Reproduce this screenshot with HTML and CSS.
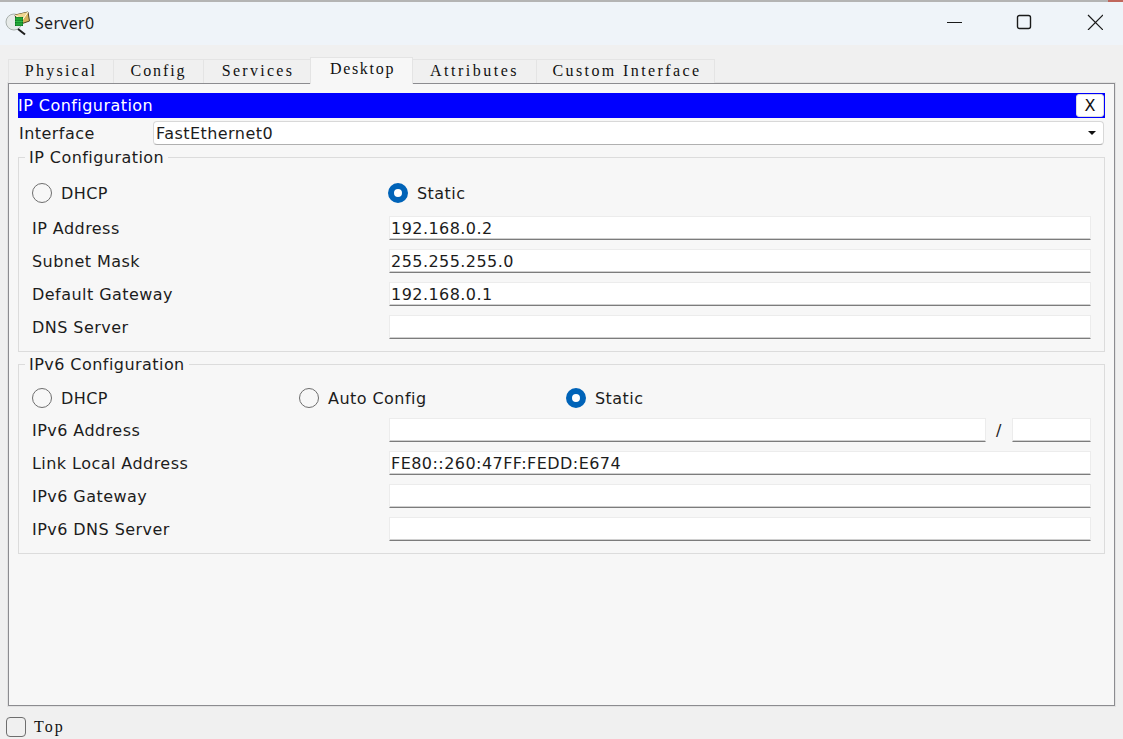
FILE: index.html
```html
<!DOCTYPE html>
<html lang="en">
<head>
<meta charset="utf-8">
<title>Server0</title>
<link rel="stylesheet" href="styles.css">
</head>
<body>
<div class="window">
  <div class="topline"><span class="topline-red"></span></div>
  <header class="titlebar">
    <svg class="appicon" width="26" height="26" viewBox="0 0 26 26">
      <circle cx="9" cy="11" r="8" fill="#e6eae8" stroke="#a9b0ad"/>
      <path d="M10 4 L23 1 L24.500 10 L13 14 Z" fill="#d8b35c" stroke="#4f4320"/>
      <path d="M10 4 L17.500 9 L23 1" fill="#efd58e" stroke="#fff8e0"/>
      <rect x="10" y="6" width="8" height="9" fill="#0b6f20"/>
      <path d="M12 6v9M14 6v9M16 6v9M10 8h8M10 10.500h8M10 13h8" stroke="#36cf4c" stroke-width=".7"/>
      <path d="M13 18 L20 23.500" stroke="#1c1c1c" stroke-width="2"/>
    </svg>
    <span class="wintitle">Server0</span>
    <div class="controls">
      <svg class="ctl-min" width="16" height="16" viewBox="0 0 16 16"><path d="M0 8.500H15" stroke="#1a1a1a"/></svg>
      <svg width="16" height="16" viewBox="0 0 16 16"><rect x="1.500" y="1.500" width="13" height="13" rx="2" fill="none" stroke="#1a1a1a" stroke-width="1.400"/></svg>
      <svg width="16" height="16" viewBox="0 0 16 16"><path d="M1 1L16 16M16 1L1 16" stroke="#1a1a1a" stroke-width="1.200"/></svg>
    </div>
  </header>
  <nav class="tabs">
    <span class="tab tab-physical">Physical</span>
    <span class="tab tab-config">Config</span>
    <span class="tab tab-services">Services</span>
    <span class="tab tab-desktop">Desktop</span>
    <span class="tab tab-attributes">Attributes</span>
    <span class="tab tab-custom">Custom Interface</span>
  </nav>
  <main class="panel">
    <div class="bluebar"><span>IP Configuration</span><span class="closebtn">X</span></div>
    <div class="ifrow">
      <span class="iflabel">Interface</span>
      <div class="select"><span>FastEthernet0</span><span class="caret"></span></div>
    </div>
    <section class="group group-v4">
      <span class="legend">IP Configuration</span>
      <div class="radios radios-v4">
        <label class="radio"><span class="dot"></span>DHCP</label>
        <label class="radio"><span class="dot on"></span>Static</label>
      </div>
      <div class="row"><span>IP Address</span><div class="field">192.168.0.2</div></div>
      <div class="row"><span>Subnet Mask</span><div class="field">255.255.255.0</div></div>
      <div class="row"><span>Default Gateway</span><div class="field">192.168.0.1</div></div>
      <div class="row"><span>DNS Server</span><div class="field"></div></div>
    </section>
    <section class="group group-v6">
      <span class="legend">IPv6 Configuration</span>
      <div class="radios radios-v6">
        <label class="radio"><span class="dot"></span>DHCP</label>
        <label class="radio"><span class="dot"></span>Auto Config</label>
        <label class="radio"><span class="dot on"></span>Static</label>
      </div>
      <div class="row"><span>IPv6 Address</span><div class="field-split"><div class="field"></div><span class="slash">/</span><div class="field prefix"></div></div></div>
      <div class="row"><span>Link Local Address</span><div class="field">FE80::260:47FF:FEDD:E674</div></div>
      <div class="row"><span>IPv6 Gateway</span><div class="field"></div></div>
      <div class="row"><span>IPv6 DNS Server</span><div class="field"></div></div>
    </section>
  </main>
  <footer class="footer"><span class="check"></span><span class="toplabel">Top</span></footer>
</div>
</body>
</html>
```
FILE: styles.css
```css
* { box-sizing: border-box; }
html, body { margin: 0; height: 100%; overflow: hidden; }
body { background: #f0f0f0; font-family: "DejaVu Sans", sans-serif; font-size: 16px; letter-spacing: .45px; color: #1c1c1c; }
.window { height: 739px; display: flex; flex-direction: column; }

.topline { height: 2px; background: #b4b4b4; display: flex; justify-content: flex-end; flex: none; }
.topline-red { width: 15px; background: #c0675c; }
.titlebar { height: 43px; flex: none; background: #eff4f9; display: flex; align-items: center; padding: 0 20px 0 5px; }
.appicon { flex: none; }
.wintitle { margin-left: 4px; font-family: "Noto Sans", sans-serif; font-size: 16px; letter-spacing: .3px; position: relative; top: -1px; }
.controls { margin-left: auto; margin-bottom: 3px; display: flex; gap: 55px; align-items: center; }
.ctl-min { margin-right: -2px; }

.tabs { display: flex; align-items: flex-end; height: 38px; padding-left: 8px; flex: none; font-family: "Liberation Serif", serif; font-size: 16px; letter-spacing: 2.3px; color: #111; position: relative; z-index: 1; }
.tab { height: 24px; display: flex; align-items: center; justify-content: center; background: #f0f0f0; border: 1px solid #e4e4e4; border-bottom: 0; margin-left: -1px; padding-bottom: 2px; }
.tab-physical { width: 106px; margin-left: 0; }
.tab-config { width: 91px; letter-spacing: 1.9px; }
.tab-services { width: 108px; padding-left: 2px; }
.tab-desktop { width: 103px; height: 27px; background: #f7f7f7; margin-bottom: -1px; padding-bottom: 4px; letter-spacing: 1.700px; padding-left: 2px; }
.tab-attributes { width: 125px; letter-spacing: 2.5px; }
.tab-custom { width: 179px; letter-spacing: 2.400px; padding-left: 3px; }

.panel { width: 1107px; height: 623px; margin-left: 8px; flex: none; background: #f7f7f7; border: 1px solid #8c8c90; padding: 9px 9px 0 9px; box-shadow: 0 0 0 1px #e2e2e2; }
.bluebar { height: 25px; background: #0000ff; color: #fff; display: flex; justify-content: space-between; align-items: center; line-height: 25px; }
.closebtn { width: 28px; height: 23px; margin-right: 1px; background: #fff; color: #111; border-radius: 3px; border: 1px solid #ddd; text-align: center; line-height: 21px; font-size: 16px; letter-spacing: 0; }
.ifrow { display: flex; align-items: center; height: 24px; margin-top: 3px; padding-left: 1px; }
.iflabel { width: 134px; flex: none; }
.select { width: 951px; height: 24px; background: #fff; border: 1px solid #d8d8d8; border-bottom-color: #b0b0b0; border-radius: 4px; display: flex; align-items: center; justify-content: space-between; padding: 0 7px 0 2px; }
.caret { width: 0; height: 0; border-left: 4px solid transparent; border-right: 4px solid transparent; border-top: 4px solid #111; }

.group { position: relative; width: 1087px; border: 1px solid #dcdcdc; padding: 0 13px 0 13px; }
.group-v4 { height: 195px; margin-top: 12px; }
.group-v6 { height: 190px; margin-top: 12px; }
.legend { position: absolute; left: 6px; top: -11px; background: #f7f7f7; padding: 0 4px; line-height: 22px; }

.radios { display: flex; align-items: center; height: 20px; }
.radios-v4 { margin-top: 25px; margin-bottom: 13px; }
.radios-v6 { margin-top: 23px; margin-bottom: 10px; }
.radio { display: flex; align-items: center; gap: 9px; }
.radios-v4 .radio:first-child { width: 356px; }
.radios-v6 .radio:first-child { width: 267px; }
.radios-v6 .radio:nth-child(2) { width: 267px; }
.dot { width: 20px; height: 20px; border-radius: 50%; border: 1px solid #6e6e6e; background: #f7f7f7; flex: none; }
.dot.on { border: 6px solid #0063b8; background: #fff; }

.row { display: flex; align-items: center; height: 24px; margin-bottom: 9px; }
.row > span { width: 357px; flex: none; }
.field { height: 24px; flex: 1; min-width: 0; background: #fff; border: 1px solid #ececec; border-bottom: 1px solid #7c7c7c; box-shadow: inset 0 -1px 0 #d0d0d0; padding-left: 1px; line-height: 23px; }
.field-split { flex: 1; display: flex; align-items: center; min-width: 0; }
.slash { width: 26px; flex: none; text-align: center; }
.prefix { flex: none; width: 79px; }

.footer { display: flex; align-items: center; height: 33px; padding: 9px 0 0 6px; flex: none; }
.check { width: 20px; height: 20px; border: 1px solid #6e6e6e; border-radius: 4px; }
.toplabel { margin-left: 8px; font-family: "Liberation Serif", serif; font-size: 16px; letter-spacing: 2.1px; color: #111; }
```
